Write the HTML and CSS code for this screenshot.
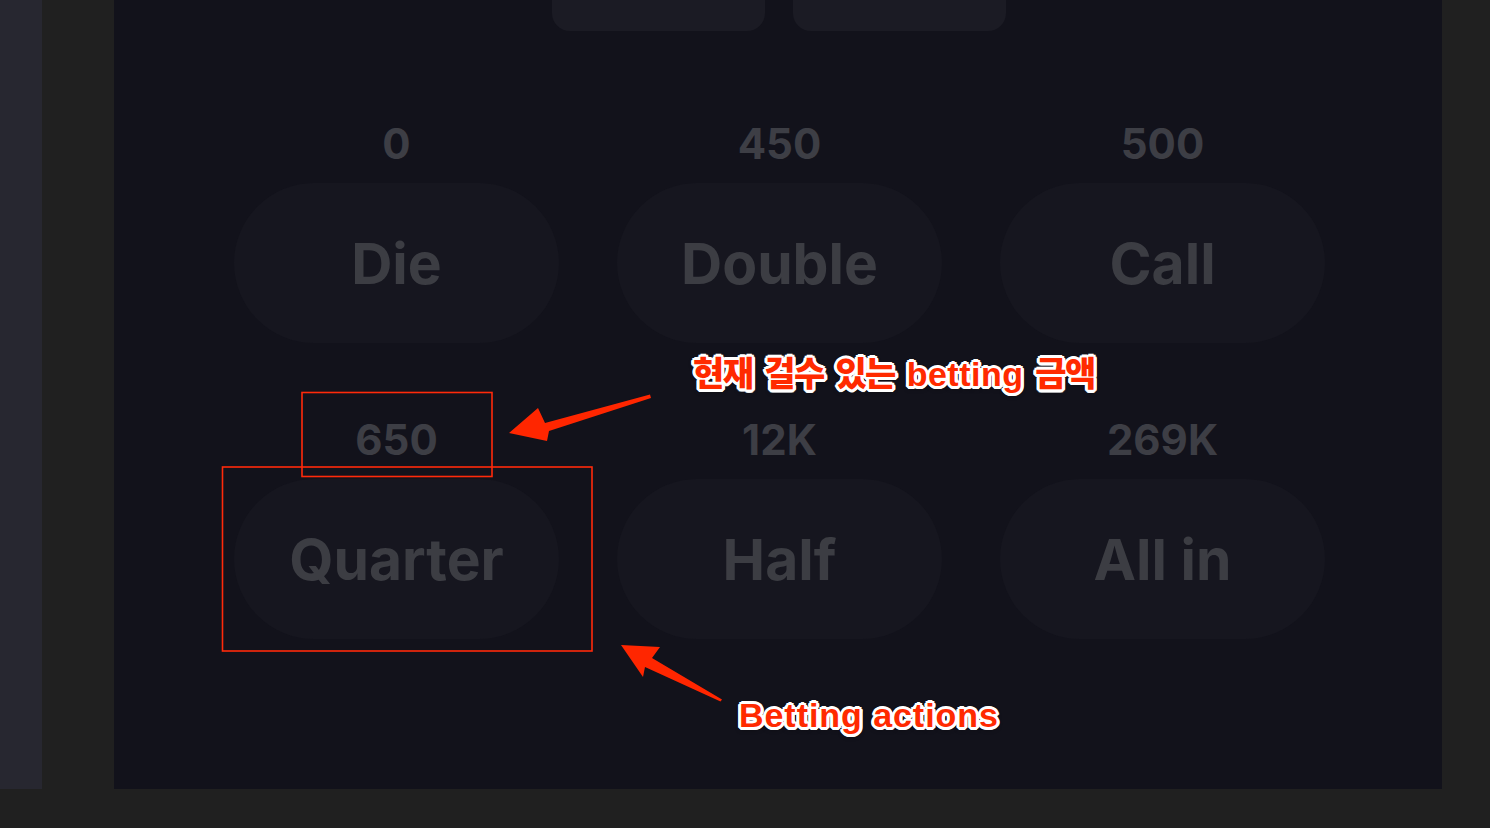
FILE: index.html
```html
<!DOCTYPE html>
<html lang="ko">
<head>
<meta charset="utf-8">
<title>Betting actions</title>
<link rel="stylesheet" href="styles.css">
</head>
<body>
<div class="screen">
  <div class="layout">
    <aside class="sidebar"></aside>
    <main class="main">
      <div class="cards">
        <div class="card"></div>
        <div class="card"></div>
      </div>
      <div class="actions">
        <div class="action"><div class="amount">0</div><button class="pill">Die</button></div>
        <div class="action"><div class="amount">450</div><button class="pill">Double</button></div>
        <div class="action"><div class="amount">500</div><button class="pill">Call</button></div>
        <div class="action"><div class="amount">650</div><button class="pill">Quarter</button></div>
        <div class="action"><div class="amount">12K</div><button class="pill">Half</button></div>
        <div class="action"><div class="amount">269K</div><button class="pill">All in</button></div>
      </div>
    </main>
  </div>

  <svg class="marks" width="1490" height="828" viewBox="0 0 1490 828" xmlns="http://www.w3.org/2000/svg">
    <rect x="302" y="392.5" width="190" height="84" fill="none" stroke="#ff2a0a" stroke-width="1.6"/>
    <rect x="222.5" y="467" width="369.5" height="184" fill="none" stroke="#ff2a0a" stroke-width="1.6"/>
    <polygon points="509,433 538,408 545,423 650,394.5 651,398 549,431 547,441" fill="#ff2600"/>
    <polygon points="621,645 660,647 652,658 722,699.5 720.5,701.5 645,667 643,677" fill="#ff2600"/>
  </svg>
  <div class="note note-amount">현재 걸수 있는 <span class="latin">betting</span> 금액</div>
  <div class="note note-actions">Betting actions</div>
</div>
</body>
</html>
```

FILE: styles.css
```css
* { box-sizing: border-box; }

html, body {
  margin: 0;
  padding: 0;
  background: #202020;
}

.screen {
  position: relative;
  width: 1490px;
  height: 828px;
  overflow: hidden;
  font-family: Inter, "Noto Sans", sans-serif;
}

.layout {
  display: flex;
  height: 789px;
  gap: 72px;
}

.sidebar {
  width: 42px;
  background: #272730;
}

.main {
  width: 1328px;
  background: #12121b;
  display: flex;
  flex-direction: column;
  align-items: center;
}

.cards {
  display: flex;
  gap: 28px;
  padding-left: 2px;
}

.card {
  width: 213px;
  height: 31px;
  background: #1b1b24;
  border-radius: 0 0 18px 18px;
}

.actions {
  margin-top: 88px;
  display: grid;
  grid-template-columns: repeat(3, 325px);
  column-gap: 58px;
  row-gap: 72px;
  padding-left: 3px;
}

.action {
  display: flex;
  flex-direction: column;
  align-items: center;
}

.amount {
  font-size: 42px;
  line-height: 50px;
  font-weight: 700;
  color: #3d3e45;
  margin-bottom: 14px;
}

.pill {
  width: 325px;
  height: 160px;
  border: none;
  border-radius: 80px;
  background: #16161f;
  color: #3c3d43;
  font-family: Inter, "Noto Sans", sans-serif;
  font-size: 57px;
  font-weight: 700;
  padding: 0;
  cursor: pointer;
}

.marks {
  position: absolute;
  left: 0;
  top: 0;
}

.note {
  position: absolute;
  font-family: "Liberation Sans", "Noto Sans CJK KR", sans-serif;
  font-weight: 700;
  color: #ff2a00;
  white-space: nowrap;
  text-shadow:
    2px 0 0 #fff, -2px 0 0 #fff, 0 2px 0 #fff, 0 -2px 0 #fff,
    2px 2px 0 #fff, -2px -2px 0 #fff, 2px -2px 0 #fff, -2px 2px 0 #fff,
    3px 0 0 #fff, -3px 0 0 #fff, 0 3px 0 #fff, 0 -3px 0 #fff,
    3px 1px 0 #fff, -3px 1px 0 #fff, 1px 3px 0 #fff, -1px 3px 0 #fff,
    0 2px 5px rgba(0,0,0,0.6);
}

.note-amount {
  left: 693px;
  top: 351px;
  font-size: 34px;
  line-height: 46px;
  letter-spacing: -1.6px;
  word-spacing: 4px;
  font-weight: 900;
}

.note-amount .latin {
  font-family: "Liberation Sans", sans-serif;
  font-weight: 700;
  font-size: 34px;
  letter-spacing: 0.5px;
}

.note-actions {
  left: 739px;
  top: 692px;
  font-size: 34px;
  line-height: 46px;
  letter-spacing: 0.95px;
}
```
